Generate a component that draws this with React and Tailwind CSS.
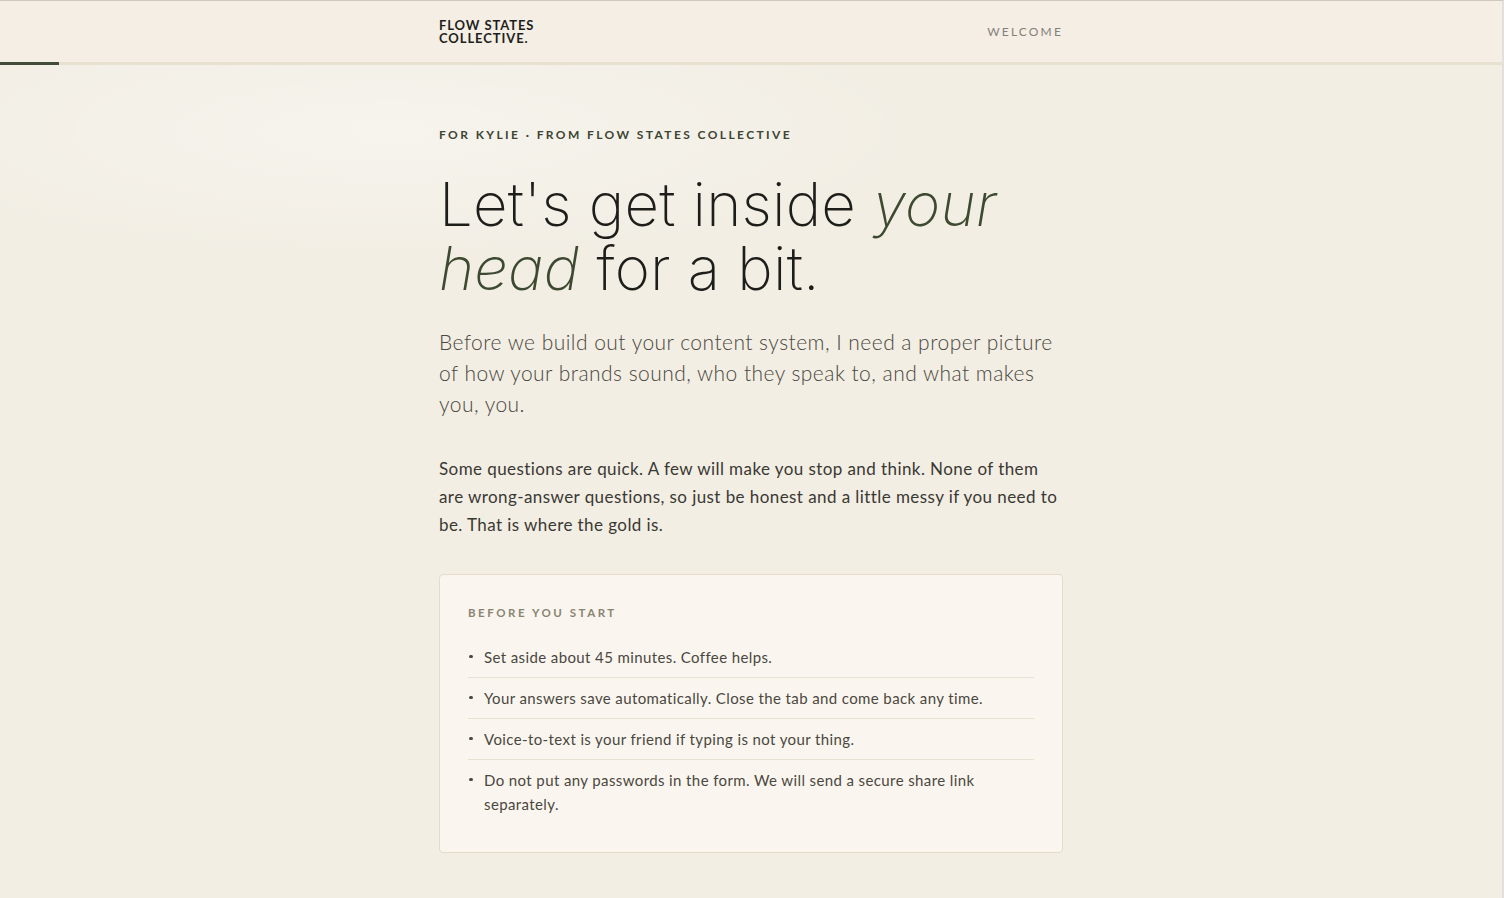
import React from 'react';

const notes = [
  'Set aside about 45 minutes. Coffee helps.',
  'Your answers save automatically. Close the tab and come back any time.',
  'Voice-to-text is your friend if typing is not your thing.',
  'Do not put any passwords in the form. We will send a secure share link separately.',
];

export default function App() {
  return (
    <div className="min-h-screen bg-[#f2eee4] border-t border-[#cfc9bd] border-r-2 border-r-[#e2e0dc] font-['Lato','Liberation_Sans',sans-serif] text-[#3a3833] overflow-hidden">
      <div className="relative">
        {/* soft light streaks */}
        <div className="pointer-events-none absolute -left-40 top-0 w-[1100px] h-[260px] rounded-[50%] bg-[radial-gradient(ellipse_at_center,rgba(255,255,255,0.35),rgba(255,255,255,0)_70%)]" />

        <header className="relative bg-[#f4eee4] h-[64px] border-b-[3px] border-[#e8e1d2]">
          <div className="max-w-[624px] mx-auto h-full flex items-center justify-between">
            <div className="font-bold text-[13px] leading-[13px] tracking-[0.07em] text-[#1f1f1c]">
              FLOW STATES<br />COLLECTIVE.
            </div>
            <div className="text-[12px] tracking-[0.18em] text-[#85807a]">WELCOME</div>
          </div>
          <div className="absolute left-0 -bottom-[3px] h-[3px] w-[59px] bg-[#434c39]" />
        </header>

        <main className="relative max-w-[624px] mx-auto pt-[64px] pb-[45px]">
          <p className="font-bold text-[12px] tracking-[0.2em] text-[#3d4433] leading-none">
            FOR KYLIE · FROM FLOW STATES COLLECTIVE
          </p>

          <h1 className="mt-[31px] font-['Inter','Lato',sans-serif] font-extralight text-[60px] leading-[64px] tracking-[0.003em] text-[#1d1d1a]">
            Let's get inside <em className="text-[#3d4a31] italic">your head</em> for a bit.
          </h1>

          <p className="mt-[26px] font-light text-[21px] leading-[31px] tracking-[0.022em] text-[#4a4740]">
            Before we build out your content system, I need a proper picture of how your brands sound, who they speak to, and what makes you, you.
          </p>

          <p className="mt-[36px] text-[17px] leading-[28px] tracking-[0.025em] text-[#3a3833]">
            Some questions are quick. A few will make you stop and think. None of them are wrong-answer questions, so just be honest and a little messy if you need to be. That is where the gold is.
          </p>

          <section className="mt-[35px] bg-[#faf6ef] border border-[#e4dcc9] rounded-[4px] px-[28px] pt-[32px] pb-[28px]">
            <h2 className="font-bold text-[11.5px] tracking-[0.22em] text-[#8a8472] leading-none">
              BEFORE YOU START
            </h2>
            <ul className="mt-[18px]">
              {notes.map((n, i) => (
                <li
                  key={i}
                  className={`flex py-[8px] text-[15px] leading-[24px] tracking-[0.026em] text-[#4a4740] ${i < notes.length - 1 ? 'border-b border-[#e8e1d1]' : ''}`}
                >
                  <span className="w-[16px] shrink-0 h-[24px] flex items-center pl-[1px]">
                    <span className="w-[3.5px] h-[3.5px] rounded-full bg-[#4a4740]" />
                  </span>
                  <span>{n}</span>
                </li>
              ))}
            </ul>
          </section>
        </main>
      </div>
    </div>
  );
}
